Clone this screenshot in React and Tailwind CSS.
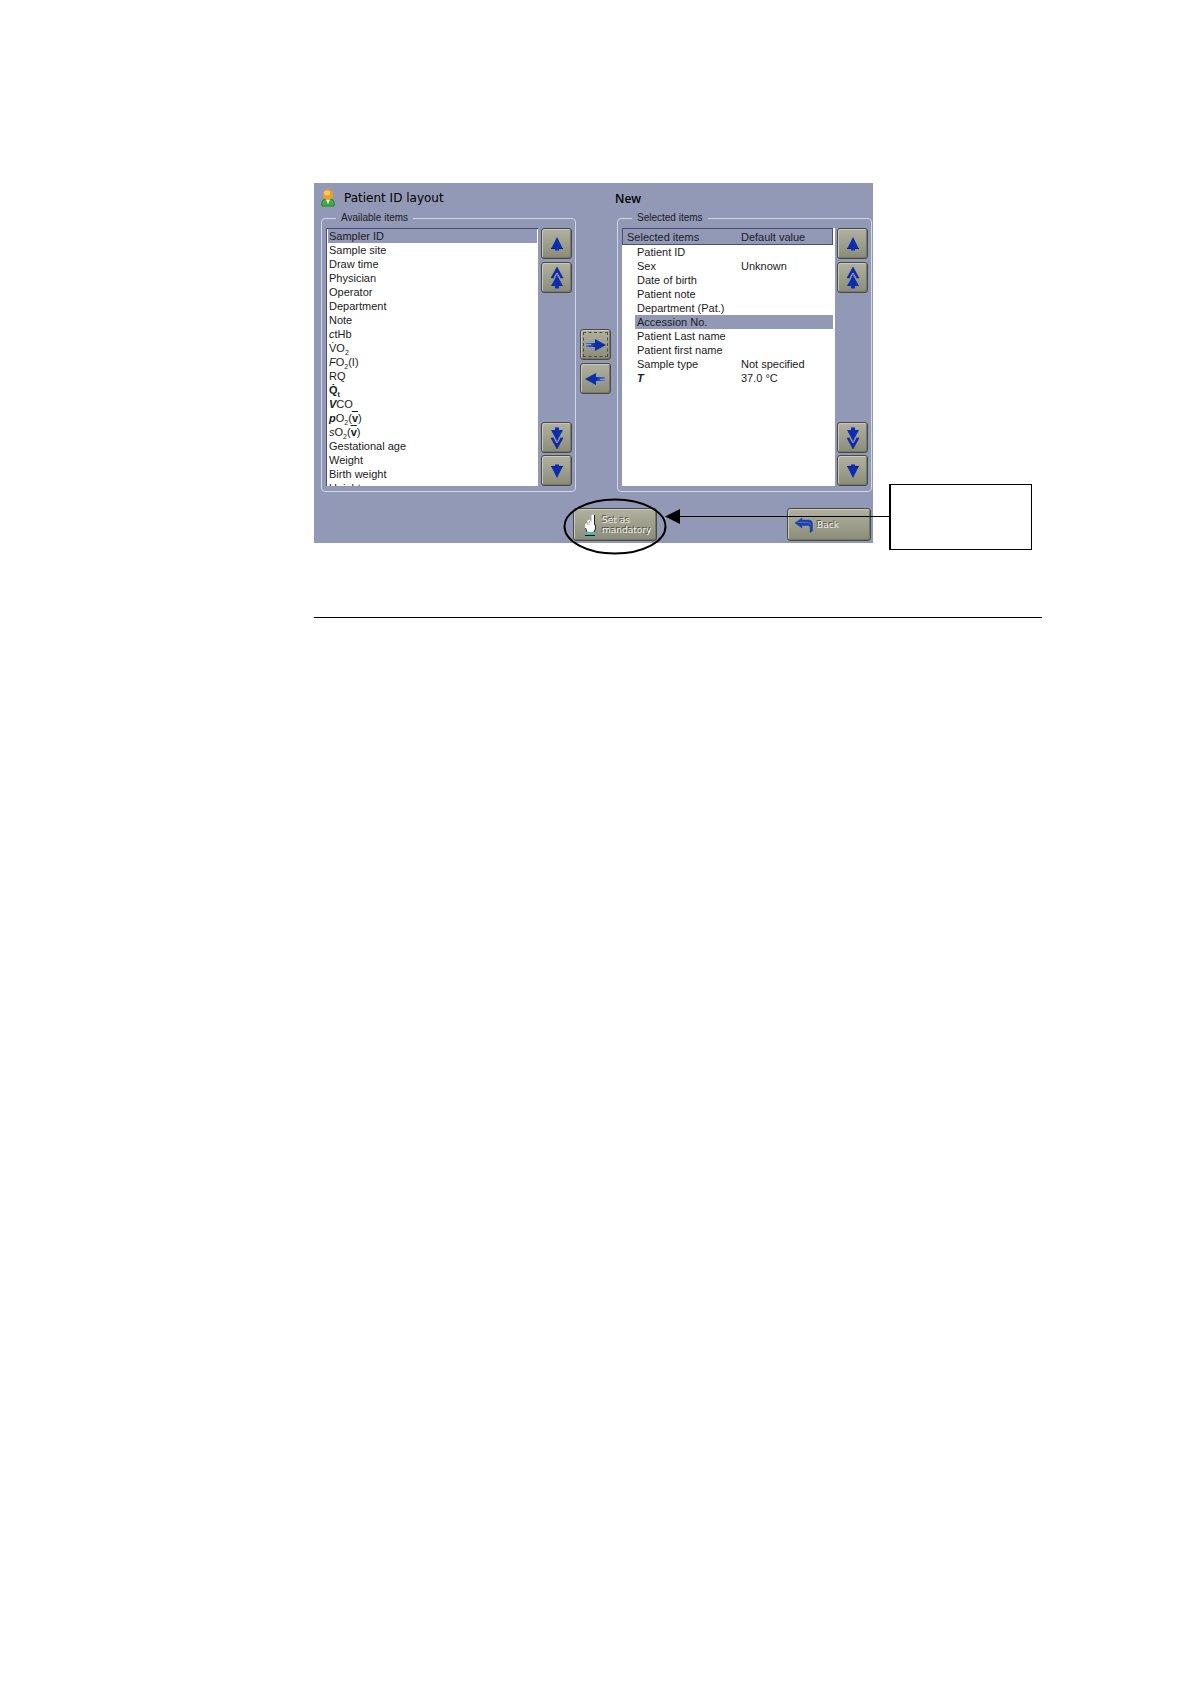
import React, { useState } from 'react';
import clsx from 'clsx';

const AVAILABLE = [
  { id: 'sampler', label: 'Sampler ID' },
  { id: 'site', label: 'Sample site' },
  { id: 'draw', label: 'Draw time' },
  { id: 'physician', label: 'Physician' },
  { id: 'operator', label: 'Operator' },
  { id: 'department', label: 'Department' },
  { id: 'note', label: 'Note' },
  { id: 'cthb', label: <><i>c</i>tHb</> },
  { id: 'vo2', label: <>V̇O<Sub>2</Sub></> },
  { id: 'fo2', label: <><i>F</i>O<Sub>2</Sub>(I)</> },
  { id: 'rq', label: 'RQ' },
  { id: 'qt', label: <b>Q̇<Sub>t</Sub></b> },
  { id: 'vco', label: <><b><i>V</i></b>CO</> },
  { id: 'pvo2', label: <><b><i>p</i></b>O<Sub>2</Sub>(<Mean>v</Mean>)</> },
  { id: 'svo2', label: <><i>s</i>O<Sub>2</Sub>(<Mean>v</Mean>)</> },
  { id: 'gest', label: 'Gestational age' },
  { id: 'weight', label: 'Weight' },
  { id: 'birth', label: 'Birth weight' },
  { id: 'height', label: 'Height' },
];

const SELECTED = [
  { id: 'patient', label: 'Patient ID', value: '' },
  { id: 'sex', label: 'Sex', value: 'Unknown' },
  { id: 'dob', label: 'Date of birth', value: '' },
  { id: 'pnote', label: 'Patient note', value: '' },
  { id: 'pdept', label: 'Department (Pat.)', value: '' },
  { id: 'accession', label: 'Accession No.', value: '' },
  { id: 'last', label: 'Patient Last name', value: '' },
  { id: 'first', label: 'Patient first name', value: '' },
  { id: 'type', label: 'Sample type', value: 'Not specified' },
  { id: 'temp', label: <b><i>T</i></b>, value: '37.0 °C' },
];

function Sub({ children }) {
  return <span className="relative top-[3px] text-[7px]">{children}</span>;
}

function Mean({ children }) {
  return <b className="overline">{children}</b>;
}

function KeyButton({ className, children, ...props }) {
  return (
    <button
      type="button"
      className={clsx(
        'flex shrink-0 items-center rounded-[3px] border border-[#4a4b3f] bg-linear-to-b from-[#b0b1a0] to-[#8b8c78] shadow-[inset_1px_1px_0_#c9cabd,inset_-1px_-1px_0_#77786a]',
        className
      )}
      {...props}
    >
      {children}
    </button>
  );
}

function VerticalArrow({ down, double }) {
  return (
    <svg width="14" height="24" viewBox="0 0 14 24" className={clsx(down && 'rotate-180')} aria-hidden="true">
      {double ? (
        <>
          <path d="M7 1 L13 12 L10 12 L7 8 L4 12 L1 12 Z" fill="#0a2eac" stroke="#14148a" strokeWidth="0.5" />
          <path d="M4 12 L7 7 L10 12" fill="none" stroke="#b09ad0" strokeWidth="1" />
          <path d="M7 9 L13 20 L9 20 L9 22 L5 22 L5 20 L1 20 Z" fill="#0a2eac" />
          <path d="M5 22.5 H9" stroke="#5b55d6" strokeWidth="1" />
        </>
      ) : (
        <>
          <path d="M7 5 L13 17 L9 17 L9 18 L5 18 L5 17 L1 17 Z" fill="#0a2eac" />
          <path d="M1 16.5 H5 M9 16.5 H13" stroke="#14148a" strokeWidth="1" />
          <path d="M5 18.5 H9" stroke="#5b55d6" strokeWidth="1" />
        </>
      )}
    </svg>
  );
}

function SideArrow({ left }) {
  return (
    <svg width="21" height="14" viewBox="0 0 21 14" className={clsx(left && 'rotate-180')} aria-hidden="true">
      <defs>
        <linearGradient id={left ? 'tailL' : 'tailR'} x1="0" x2="1">
          <stop offset="0" stopColor="#5b74dc" />
          <stop offset="0.45" stopColor="#0a2eac" />
        </linearGradient>
      </defs>
      <path d="M1 5 H10 V1 L21 7 L10 13 V9 H1 Z" fill={left ? 'url(#tailL)' : 'url(#tailR)'} />
      <path d="M1 6.5 H6" stroke="#8c9fea" strokeWidth="1" />
    </svg>
  );
}

function ScrollKeys({ name }) {
  return (
    <div className="flex w-[31px] shrink-0 flex-col justify-between">
      <div className="flex flex-col gap-[3px]">
        <KeyButton className="h-[31px] justify-center" aria-label={`${name}: up`}>
          <VerticalArrow />
        </KeyButton>
        <KeyButton className="h-[31px] justify-center" aria-label={`${name}: page up`}>
          <VerticalArrow double />
        </KeyButton>
      </div>
      <div className="flex flex-col gap-[2px]">
        <KeyButton className="h-[31px] justify-center" aria-label={`${name}: page down`}>
          <VerticalArrow down double />
        </KeyButton>
        <KeyButton className="h-[31px] justify-center" aria-label={`${name}: down`}>
          <VerticalArrow down />
        </KeyButton>
      </div>
    </div>
  );
}

function ItemGroup({ title, children }) {
  return (
    <fieldset className="min-w-0 rounded-[4px] border border-[#d3d7e3] pr-[3px] pb-[5px] pl-1">
      <legend className="ml-[10px] px-[5px] text-[10px] leading-[12px]">{title}</legend>
      <div className="flex h-[262px] gap-[2px] pt-1">
        {children}
        <ScrollKeys name={title} />
      </div>
    </fieldset>
  );
}

function PatientIcon() {
  return (
    <svg width="14" height="18" viewBox="0 0 14 18" aria-hidden="true">
      <path d="M1 17 Q0 11 4 10 H10 Q14 11 13 17 Z" fill="#3fb14a" stroke="#1d7d2b" strokeWidth="1" />
      <path d="M5 10 L7 15 L9 10 Z" fill="#fff" />
      <ellipse cx="7" cy="5.5" rx="5" ry="5.5" fill="#ee9f26" />
      <ellipse cx="6" cy="4" rx="3" ry="2.5" fill="#f9c865" />
    </svg>
  );
}

function HandIcon() {
  return (
    <svg width="12" height="22" viewBox="0 0 12 22" aria-hidden="true">
      <path
        d="M7.5 8 V1 Q9 0 10 1 V10 L11 12 V15 L9.5 18 H2.5 L1 14 V10 L3 9 L3.5 6.5 L5.5 5.5 Z"
        fill="#fff"
      />
      <path d="M10.5 1 V10 L11.5 12 V15 L10 18" fill="none" stroke="#222" strokeWidth="1" />
      <path d="M3.5 8 L3 11 M5.5 7 L5 11" stroke="#777" strokeWidth="0.6" />
      <path d="M1.5 14 L3 18" stroke="#222" strokeWidth="1" />
      <path d="M1 19.5 H11" stroke="#25c7c9" strokeWidth="2" />
      <path d="M1 21.5 H11" stroke="#111" strokeWidth="1" />
    </svg>
  );
}

function BackIcon() {
  return (
    <svg width="20" height="16" viewBox="0 0 20 16" aria-hidden="true">
      <path d="M1 6 L8 1 V3 H15 Q18.5 3 18.5 7 V14 L16 15.5 V10 Q16 8.5 14 8.5 H8 V11 Z" fill="#1c40b4" stroke="#29408e" strokeWidth="0.5" />
      <path d="M4 5.5 H14 Q16.5 5.5 16.5 8" fill="none" stroke="#4a6cd4" strokeWidth="1" />
    </svg>
  );
}

function PatientLayoutScreen() {
  const [available, setAvailable] = useState('sampler');
  const [selected, setSelected] = useState('accession');

  return (
    <section className="min-w-0 flex-1 bg-[#9299b6] pr-px pb-[2px] pl-[7px] text-[#1b1b22]">
      <header className="grid h-[29px] grid-cols-[minmax(0,1fr)_41px_minmax(0,1fr)] items-center font-['DejaVu_Sans',sans-serif] text-[12px] leading-4 text-black">
        <h1 className="flex items-center gap-[9px]">
          <PatientIcon />
          Patient ID layout
        </h1>
        <h2 className="col-start-2 pt-[2px] pl-[39px] font-['Open_Sans',sans-serif] font-semibold whitespace-nowrap">New</h2>
      </header>

      <div className="grid grid-cols-[minmax(0,1fr)_41px_minmax(0,1fr)]">
        <ItemGroup title="Available items">
          <ul
            role="listbox"
            aria-label="Available items"
            className="mr-px min-w-0 flex-1 overflow-hidden border-t border-l border-[#4a4f78] bg-white pr-px pl-px text-[11px] leading-[14px]"
          >
            {AVAILABLE.map((item) => (
              <li
                key={item.id}
                role="option"
                aria-selected={item.id === available}
                onClick={() => setAvailable(item.id)}
                className={clsx('h-[14px] pl-[1px] whitespace-nowrap', item.id === available && 'bg-[#9299b6]')}
              >
                {item.label}
              </li>
            ))}
          </ul>
        </ItemGroup>

        <div className="flex flex-col gap-[3px] pt-[117px] pl-1">
          <KeyButton className="h-[31px] w-[31px] p-[2px]" aria-label="Add item">
            <span className="flex h-full w-full items-center justify-center border border-dashed border-[#4b4c40]">
              <SideArrow />
            </span>
          </KeyButton>
          <KeyButton className="h-[31px] w-[31px] justify-center" aria-label="Remove item">
            <SideArrow left />
          </KeyButton>
        </div>

        <ItemGroup title="Selected items">
          <div className="min-w-0 flex-1 overflow-hidden bg-white pr-[2px]">
            <table className="w-full table-fixed border-separate border-spacing-0 text-[11px] leading-[14px]">
              <colgroup>
                <col className="w-[13px]" />
                <col className="w-[104px]" />
                <col />
              </colgroup>
              <thead>
                <tr className="bg-[#9299b6] text-left">
                  <th colSpan={2} className="h-[17px] border-y border-l border-[#4a4f78] p-0 pl-1 font-normal">
                    Selected items
                  </th>
                  <th className="border-y border-r border-[#4a4f78] p-0 pl-[2px] font-normal">Default value</th>
                </tr>
              </thead>
              <tbody>
                {SELECTED.map((row) => (
                  <tr key={row.id} onClick={() => setSelected(row.id)} className="h-[14px] whitespace-nowrap">
                    <td className="p-0" />
                    <td className={clsx('p-0 pl-[2px]', row.id === selected && 'bg-[#9299b6]')}>{row.label}</td>
                    <td className={clsx('p-0 pl-[2px]', row.id === selected && 'bg-[#9299b6]')}>{row.value}</td>
                  </tr>
                ))}
              </tbody>
            </table>
          </div>
        </ItemGroup>
      </div>

      <footer className="flex justify-end gap-[130px] pt-4 pr-px font-['DejaVu_Sans',sans-serif] text-[9px] leading-[10px] text-[#f4f4ee]">
        <div className="relative">
          <KeyButton className="h-[33px] w-[84px] gap-[6px] pl-[10px] text-left [text-shadow:-1px_-1px_0_#4a4b40]">
            <HandIcon />
            <span>
              Set as
              <br />
              mandatory
            </span>
          </KeyButton>
          {/* Ring that marks the button; spills out of the screen area */}
          <svg
            className="pointer-events-none absolute -top-[10px] -left-[10px]"
            width="104"
            height="57"
            viewBox="0 0 104 57"
            aria-hidden="true"
          >
            <ellipse cx="52" cy="28.5" rx="50.5" ry="27" fill="none" stroke="#000" strokeWidth="2" />
          </svg>
        </div>
        <KeyButton className="h-[33px] w-[84px] gap-[3px] pl-[6px] [text-shadow:-1px_-1px_0_#4a4b40]">
          <BackIcon />
          Back
        </KeyButton>
      </footer>
    </section>
  );
}

function Callout() {
  return (
    <div className="relative mt-[301px] mr-[10px] w-[143px] shrink-0">
      <div className="h-[66px] border border-l-2 border-black bg-white" />
      {/* Leader line back to the ringed button */}
      <svg
        className="pointer-events-none absolute top-[25px] right-full"
        width="224"
        height="16"
        viewBox="0 0 224 16"
        aria-hidden="true"
      >
        <path d="M0 7.5 L15 0 V15 Z" fill="#000" />
        <path d="M15 7.5 H224" stroke="#000" strokeWidth="1" />
      </svg>
    </div>
  );
}

export default function App() {
  return (
    <main className="min-h-screen bg-white pt-[183px] pr-[148px] pl-[314px] font-['Liberation_Sans',Arial,sans-serif]">
      <div className="flex items-start gap-4">
        <PatientLayoutScreen />
        <Callout />
      </div>
      <hr className="mt-[67px] border-t border-black" />
    </main>
  );
}
